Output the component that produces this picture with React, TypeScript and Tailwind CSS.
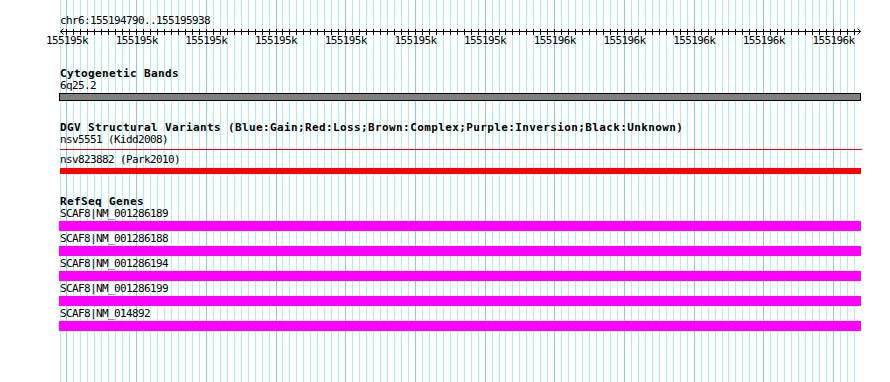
import React from "react";

const START = 155194790;
const END = 155195938;
const PX = 800 / (END - START);

const gridLines = Array.from({ length: 115 }, (_, k) => ({
  x: Math.floor(60 + k * 10 * PX),
  major: k % 10 === 1,
}));

const rulerLabels = Array.from({ length: 12 }, (_, j) => {
  const bp = 155194800 + 100 * j;
  return { center: 60 + (bp - START) * PX, text: `${Math.round(bp / 1000)}k` };
});

const reg = "font-['DejaVu_Sans_Mono',monospace] text-[11px] leading-[12px] tracking-[-0.62px] text-black whitespace-nowrap";
const bold = "font-['DejaVu_Sans_Mono',monospace] font-bold text-[11px] leading-[12px] tracking-[0.38px] text-black whitespace-nowrap";

function Grid() {
  return (
    <svg className="absolute inset-0 z-0" width={890} height={382}>
      {gridLines.map((g, i) => (
        <line
          key={i}
          x1={g.x + 0.5}
          x2={g.x + 0.5}
          y1={0}
          y2={382}
          stroke={g.major ? "#8cc8e6" : "#afeeee"}
          strokeWidth={1}
        />
      ))}
    </svg>
  );
}

function Ruler() {
  return (
    <div className="h-[47px]">
      <div className={`${reg} h-[26px] pt-[15px] pl-[60px]`}>chr6:155194790..155195938</div>
      <svg className="block" width={890} height={10}>
        <line x1={60} x2={861} y1={5.5} y2={5.5} stroke="#000" strokeWidth={1} />
        {gridLines.slice(1).map((g, i) => (
          <line key={i} x1={g.x + 0.5} x2={g.x + 0.5} y1={3} y2={9} stroke="#000" strokeWidth={1} />
        ))}
        <polyline points="63.5,2.5 60.5,5.5 63.5,8.5" fill="none" stroke="#000" strokeWidth={1} />
        <polyline points="857.5,2.5 860.5,5.5 857.5,8.5" fill="none" stroke="#000" strokeWidth={1} />
      </svg>
      <div className="relative h-[11px] -mt-[1px]">
        {rulerLabels.map((l, i) => (
          <span key={i} className={`${reg} absolute top-0 w-[42px] text-center`} style={{ left: l.center - 21 }}>
            {l.text}
          </span>
        ))}
      </div>
    </div>
  );
}

const genes = [
  "SCAF8|NM_001286189",
  "SCAF8|NM_001286188",
  "SCAF8|NM_001286194",
  "SCAF8|NM_001286199",
  "SCAF8|NM_014892",
];

export default function App() {
  return (
    <div className="relative w-[890px] h-[382px] bg-white overflow-hidden">
      <Grid />
      <div className="relative z-10 flex flex-col">
        <Ruler />

        {/* Cytogenetic Bands */}
        <div className={`${bold} mt-[21px] h-[12px] pl-[60px]`}>Cytogenetic Bands</div>
        <div className={`${reg} h-[13px] pl-[60px]`}>6q25.2</div>
        <div className="ml-[59px] w-[802px] h-[8px] bg-[#808080] border border-black" />

        {/* DGV */}
        <div className={`${bold} mt-[21px] h-[12px] pl-[60px]`}>
          DGV Structural Variants (Blue:Gain;Red:Loss;Brown:Complex;Purple:Inversion;Black:Unknown)
        </div>
        <div className={`${reg} h-[15px] pl-[60px]`}>nsv5551 (Kidd2008)</div>
        <div className="ml-[60px] w-[802px] h-[1px] bg-[#ff0000]" />
        <div className={`${reg} mt-[4px] h-[14px] pl-[60px]`}>nsv823882 (Park2010)</div>
        <div className="ml-[60px] w-[801px] h-[6px] bg-[#ff0000]" />

        {/* RefSeq */}
        <div className={`${bold} mt-[22px] h-[12px] pl-[60px]`}>RefSeq Genes</div>
        {genes.map((g, i) => (
          <div key={g} className="flex flex-col">
            <div className={`${reg} ${i === 0 ? "" : "mt-[2px]"} h-[13px] pl-[60px]`}>{g}</div>
            <div className="ml-[59px] w-[802px] h-[10px] bg-[#ff00ff]" />
          </div>
        ))}
      </div>
    </div>
  );
}
